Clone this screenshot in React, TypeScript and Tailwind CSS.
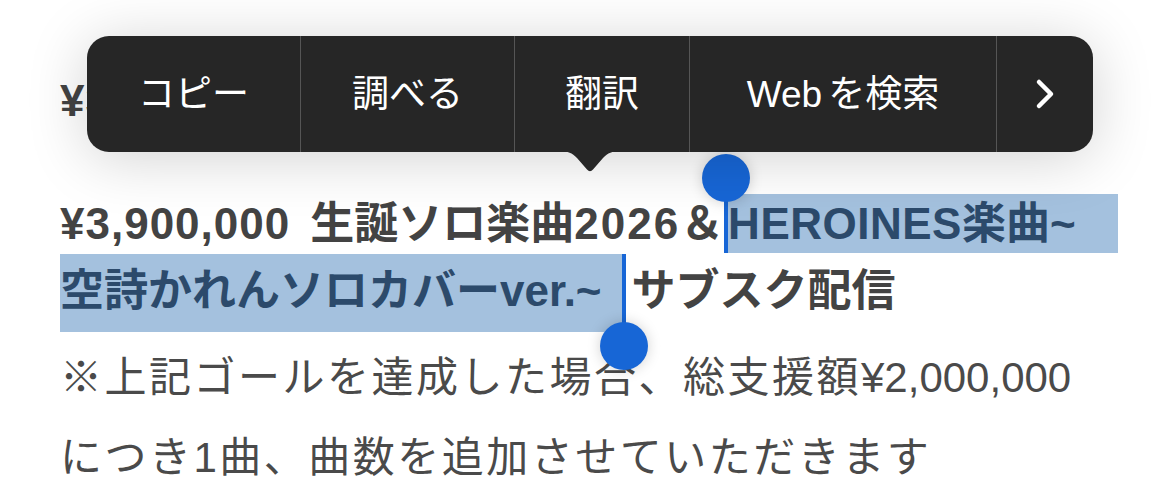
export default function App() {
  const blue = "bg-[#1766d6]";
  return (
    <div className="relative h-[503px] w-[1159px] overflow-hidden bg-white font-['Liberation_Sans','Noto_Sans_CJK_JP',sans-serif]">
      <div className="ml-[60px] w-[1058px] pt-[68px]">
        {/* line hidden behind the menu */}
        <div className="flex h-[66px] items-center whitespace-nowrap text-[44px] font-bold leading-none text-[#434343]">
          <span className="tracking-[1px]">¥3</span>
        </div>

        {/* heading line 1 */}
        <div className="mt-[60px] flex h-[59px] whitespace-nowrap text-[44px] font-bold leading-none">
          <span className="flex items-center text-[#434343]">
            <span className="tracking-[1px]">¥3,900,000</span>
            <span className="ml-[20px]">生誕ソロ楽曲</span>
            <span className="tracking-[2px]">2026</span>
            <span>＆</span>
          </span>
          <span className={`relative w-[4px] self-stretch ${blue}`}>
            <span className={`absolute left-1/2 top-[-40px] h-[48px] w-[48px] -translate-x-1/2 rounded-full ${blue} shadow-[0_0_14px_rgba(0,0,0,0.18)]`} />
          </span>
          <span className="flex flex-1 items-center bg-[#a4c1de] text-[#2c4a6b]">
            <span className="tracking-[0.5px]">HEROINES</span>
            <span>楽曲~</span>
          </span>
        </div>

        {/* heading line 2 */}
        <div className="mt-px flex h-[78px] whitespace-nowrap text-[44px] font-bold leading-none">
          <span className="flex items-center bg-[#a4c1de] pr-[20px] pb-[4px] text-[#2c4a6b]">
            空詩かれんソロカバーver.~
          </span>
          <span className={`relative w-[4px] self-stretch ${blue}`}>
            <span className={`absolute left-1/2 top-[68px] h-[48px] w-[48px] -translate-x-1/2 rounded-full ${blue} shadow-[0_0_14px_rgba(0,0,0,0.18)]`} />
          </span>
          <span className="ml-[6px] flex items-center pb-[4px] text-[#434343]">サブスク配信</span>
        </div>

        {/* body lines */}
        <div className="mt-[6px] flex h-[80px] items-center whitespace-nowrap text-[42px] leading-none tracking-[2.5px] text-[#4a4a4a]">
          <span>※上記ゴールを達成した場合、総支援額</span>
          <span className="tracking-normal">¥2,000,000</span>
        </div>
        <div className="flex h-[80px] items-center whitespace-nowrap text-[42px] leading-none tracking-[2.5px] text-[#4a4a4a]">
          につき1曲、曲数を追加させていただきます
        </div>
      </div>

      {/* edit menu overlay */}
      <div className="absolute left-[87px] top-[36px] h-[116px] w-[1006px]">
        <div className="flex h-full overflow-hidden rounded-[22px] bg-[#262626] text-[37px] leading-none text-white shadow-[0_6px_60px_rgba(0,0,0,0.18)]">
          <div className="flex w-[213px] items-center justify-center">コピー</div>
          <div className="w-px bg-[#555555]" />
          <div className="flex w-[213px] items-center justify-center">調べる</div>
          <div className="w-px bg-[#555555]" />
          <div className="flex w-[174px] items-center justify-center">翻訳</div>
          <div className="w-px bg-[#555555]" />
          <div className="flex w-[306px] items-center justify-center">
            <span>Web</span>
            <span className="ml-[6px]">を検索</span>
          </div>
          <div className="w-px bg-[#555555]" />
          <div className="flex flex-1 items-center justify-center">
            <svg width="20" height="32" viewBox="0 0 20 32" fill="none">
              <polyline points="4,4 16,16 4,28" stroke="white" strokeWidth="4.5" strokeLinecap="round" strokeLinejoin="round" />
            </svg>
          </div>
        </div>
        <svg className="absolute left-[473px] top-[115px]" width="60" height="23" viewBox="0 0 60 23">
          <path d="M0,0 C8,0 12,2 17,7 L27,18.5 Q30,22 33,18.5 L43,7 C48,2 52,0 60,0 Z" fill="#262626" />
        </svg>
      </div>
    </div>
  );
}
